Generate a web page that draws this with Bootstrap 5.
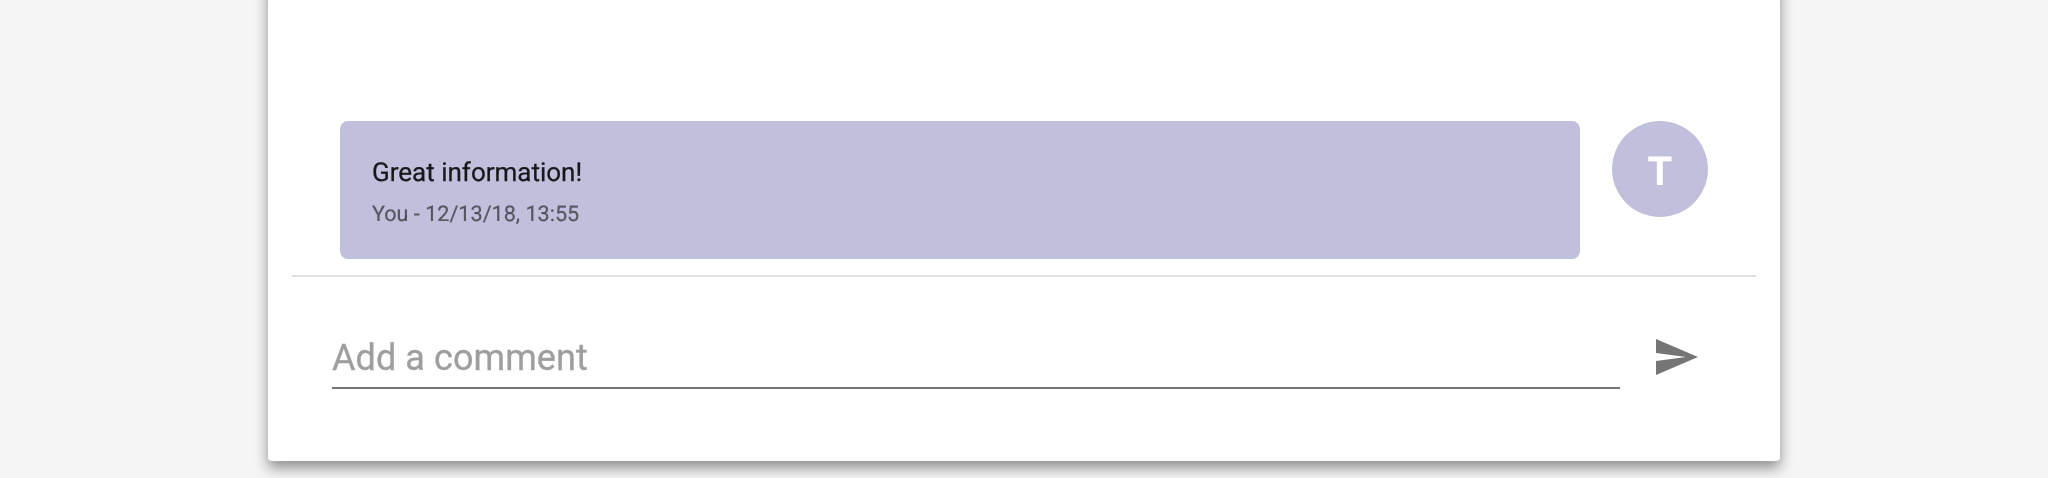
<!DOCTYPE html>
<html lang="en">
<head>
    <meta charset="UTF-8">
    <meta name="viewport" content="width=device-width, initial-scale=1.0">
    <link href="https://cdn.jsdelivr.net/npm/bootstrap@5.3.3/dist/css/bootstrap.min.css" rel="stylesheet">
    <script src="https://cdn.jsdelivr.net/npm/bootstrap@5.3.3/dist/js/bootstrap.bundle.min.js"></script>
    <title>Comments</title>
    <style>
        body {
            font-family: Roboto, sans-serif;
            background-color: #f5f5f5;
            height: 478px;
            overflow: hidden;
            text-rendering: geometricPrecision;
        }

        .comment-panel {
            width: 1512px;
            height: 481px;
            margin: -20px auto 0;
            padding: 141px 24px 0;
            background-color: #fff;
            border-radius: 4px;
            box-shadow: 0 7px 14px rgba(0, 0, 0, .42);
            will-change: transform;
        }

        .comment-row {
            padding: 0 48px;
            margin-bottom: 16px;
            gap: 32px;
        }

        .comment-bubble {
            height: 138px;
            padding: 32px;
            background-color: #c1c0dc;
            border-radius: 8px;
            color: rgba(0, 0, 0, .87);
        }

        .comment-text {
            font-size: 26px;
            line-height: 36px;
            margin: 0;
            margin-top: 2px;
            -webkit-text-stroke: .25px;
        }

        .comment-meta {
            font-size: 21.6px;
            line-height: 28px;
            margin: 10px 0 0;
            color: rgba(0, 0, 0, .54);
            -webkit-text-stroke: .2px;
        }

        .comment-avatar {
            width: 96px;
            height: 96px;
            padding-top: 5px;
            background-color: #c1c0dc;
            color: #fff;
            font-size: 40px;
            font-weight: 700;
        }

        .comment-divider {
            height: 2px;
            background-color: #e0e0e0;
        }

        .add-row {
            padding: 56px 56px 0 40px;
        }

        .add-input {
            width: 1288px;
            height: 56px;
            padding: 0 0 4px;
            border: 0;
            border-bottom: 2px solid #757575;
            outline: 0;
            font-size: 36px;
            line-height: 44px;
            letter-spacing: .08px;
            background: transparent;
            -webkit-text-stroke: .3px;
        }

        .add-input::placeholder {
            color: #9e9e9e;
            opacity: 1;
        }

        .send-button {
            width: 48px;
            height: 48px;
            margin-left: 32px;
            border: 0;
            background: transparent;
        }
    </style>
</head>
<body>
    <div class="comment-panel">
        <div class="comment-row d-flex align-items-start">
            <div class="comment-bubble flex-grow-1">
                <p class="comment-text">Great information!</p>
                <p class="comment-meta">You - 12/13/18, 13:55</p>
            </div>
            <div class="comment-avatar rounded-circle flex-shrink-0 d-flex align-items-center justify-content-center">T</div>
        </div>
        <div class="comment-divider"></div>
        <div class="add-row d-flex align-items-start">
            <input class="add-input" type="text" placeholder="Add a comment">
            <button class="send-button p-0 d-block" type="button" aria-label="Send">
                <svg class="d-block" width="48" height="48" viewBox="0 0 24 24" fill="#757575"><path d="M2.01 21 23 12 2.01 3 2 10l15 2-15 2z"/></svg>
            </button>
        </div>
    </div>
</body>
</html>
